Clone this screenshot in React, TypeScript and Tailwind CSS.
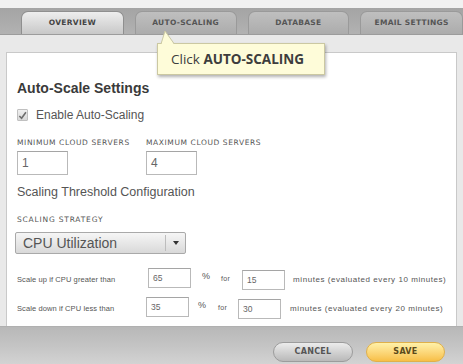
import React from "react";

const tabFont = { fontFamily: '"DejaVu Sans", Verdana, sans-serif' };
const sans = { fontFamily: '"Liberation Sans", Arial, sans-serif' };

function Tab({ label, active, w }: { label: string; active?: boolean; w: number }) {
  return (
    <div
      style={{ width: w, ...tabFont }}
      className={
        "h-[23px] rounded-t-[7px] flex items-center justify-center text-[7.5px] font-bold tracking-[0.3px] border border-b-0 " +
        (active
          ? "bg-gradient-to-b from-[#eeeeee] to-[#c8c8c8] border-[#8f8f8f] text-[#444]"
          : "bg-gradient-to-b from-[#bfbfbf] to-[#acacac] border-[#9a9a9a] text-[#555]")
      }
    >
      {label}
    </div>
  );
}

function Box({ value, w, h, size }: { value: string; w: number; h: number; size: number }) {
  return (
    <div
      style={{ width: w, height: h, fontSize: size, ...sans }}
      className="bg-white border border-[#b9b9b9] border-t-[#a5a5a5] text-[#666] pl-[4px] flex items-center shrink-0"
    >
      {value}
    </div>
  );
}

function Row({
  label,
  v1,
  v2,
  note,
  labelW,
  pctMl,
  forMl,
  boxMl,
  noteMl,
}: {
  label: string;
  v1: string;
  v2: string;
  note: string;
  labelW: number;
  pctMl: number;
  forMl: number;
  boxMl: number;
  noteMl: number;
}) {
  return (
    <div className="flex items-center h-[20px] text-[#555]" style={sans}>
      <div style={{ width: labelW }} className="text-[7.5px] tracking-[0.1px] shrink-0">
        {label}
      </div>
      <div className="pb-[4px] flex">
        <Box value={v1} w={43} h={20} size={8.5} />
      </div>
      <div style={{ marginLeft: pctMl }} className="text-[9px] -mt-[6px]">%</div>
      <div style={{ marginLeft: forMl }} className="text-[7px] tracking-[0.3px] -mt-[2px]">for</div>
      <div style={{ marginLeft: boxMl }} className="flex">
        <Box value={v2} w={43} h={20} size={8.5} />
      </div>
      <div style={{ marginLeft: noteMl }} className="text-[8px] tracking-[0.55px] whitespace-nowrap">
        {note}
      </div>
    </div>
  );
}

export default function App() {
  return (
    <div className="relative w-[463px] h-[364px] overflow-hidden bg-[#ebebeb] flex flex-col">
      <div className="h-[8px] bg-[#f1f1f1] shrink-0" />
      <div className="h-[27px] shrink-0 bg-gradient-to-b from-[#a4a4a4] to-[#b2b2b2] flex items-end pl-[21px] gap-[11px] border-b border-[#9c9c9c]">
        <Tab label="OVERVIEW" active w={103} />
        <Tab label="AUTO-SCALING" w={102} />
        <Tab label="DATABASE" w={102} />
        <Tab label="EMAIL SETTINGS" w={103} />
      </div>
      <div className="flex-1 pt-[17px] pl-[6px] pr-[6px] bg-[#e9e9e9]">
        <div className="h-[274px] bg-white border border-[#c9c9c9] border-b-0 pl-[10px] flex flex-col" style={sans}>
          <div className="mt-[27px] h-[17px] text-[14px] font-bold text-[#3a3a3a] leading-[17px]">
            Auto-Scale Settings
          </div>
          <div className="mt-[11px] h-[14px] flex items-center gap-[8px]">
            <div className="w-[11px] h-[12px] bg-gradient-to-b from-[#f0f0f0] to-[#d8d8d8] border border-[#c0c0c0] rounded-[1px] flex items-center justify-center">
              <svg width="10" height="9" viewBox="0 0 10 9">
                <path d="M1.5 5 L4 7.5 L8.8 1" fill="none" stroke="#6e6e6e" strokeWidth="1.8" />
              </svg>
            </div>
            <div className="text-[12px] text-[#555] leading-[14px]">Enable Auto-Scaling</div>
          </div>
          <div className="mt-[16px] h-[9px] flex text-[7.5px] leading-[9px] tracking-[0.6px] text-[#555]" style={tabFont}>
            <div className="w-[129px]">MINIMUM CLOUD SERVERS</div>
            <div>MAXIMUM CLOUD SERVERS</div>
          </div>
          <div className="mt-[4px] flex">
            <div className="w-[129px]">
              <Box value="1" w={51} h={24} size={12} />
            </div>
            <Box value="4" w={51} h={24} size={12} />
          </div>
          <div className="mt-[10px] h-[15px] text-[12.5px] leading-[15px] text-[#555]">
            Scaling Threshold Configuration
          </div>
          <div className="mt-[15px] h-[9px] text-[7.5px] leading-[9px] tracking-[0.8px] text-[#555]" style={tabFont}>
            SCALING STRATEGY
          </div>
          <div className="mt-[8px] w-[171px] h-[22px] -ml-[2px] rounded-[2px] border border-[#a9a9a9] bg-gradient-to-b from-[#f6f6f6] to-[#d9d9d9] flex items-center">
            <div className="flex-1 pl-[7px] text-[14px] text-[#555]">CPU Utilization</div>
            <div className="w-px h-[16px] bg-[#bdbdbd]" />
            <div className="w-[19px] flex justify-center">
              <svg width="6" height="4" viewBox="0 0 6 4">
                <path d="M0 0 H6 L3 4 Z" fill="#333" />
              </svg>
            </div>
          </div>
          <div className="mt-[16px]">
            <Row
              label="Scale up if CPU greater than"
              v1="65"
              v2="15"
              note="minutes (evaluated every 10 minutes)"
              labelW={131}
              pctMl={11}
              forMl={11}
              boxMl={12}
              noteMl={8}
            />
          </div>
          <div className="mt-[9px]">
            <Row
              label="Scale down if CPU less than"
              v1="35"
              v2="30"
              note="minutes (evaluated every 20 minutes)"
              labelW={129}
              pctMl={9}
              forMl={12}
              boxMl={11}
              noteMl={9}
            />
          </div>
        </div>
      </div>
      <div className="h-[38px] shrink-0 border-t border-[#b0b0b0] bg-gradient-to-b from-[#b8b8b8] via-[#c4c4c4] to-[#d3d3d3] flex justify-end items-start pt-[15px] pr-[18px] gap-[13px]">
        <div
          className="w-[80px] h-[20px] rounded-full border border-[#9c9c9c] bg-gradient-to-b from-[#ececec] to-[#b9b9b9] flex items-center justify-center text-[8px] font-bold tracking-[0.3px] text-[#555]"
          style={tabFont}
        >
          CANCEL
        </div>
        <div
          className="w-[79px] h-[20px] rounded-full border border-[#e0b04a] bg-gradient-to-b from-[#fff1a8] to-[#f7bf45] flex items-center justify-center text-[8px] font-bold tracking-[0.3px] text-[#5b4a1c]"
          style={tabFont}
        >
          SAVE
        </div>
      </div>

      {/* Tooltip */}
      <div
        className="absolute left-[157px] top-[43px] w-[168px] h-[32px] bg-[#fefcd9] border border-[#cbc8a2] shadow-[1px_2px_3px_rgba(0,0,0,0.3)] flex items-center pl-[13px] text-[13.5px] text-[#3d3d3d]"
        style={{ fontFamily: '"Open Sans", "Noto Sans", sans-serif' }}
      >
        <span>Click&nbsp;</span>
        <span className="font-bold">AUTO-SCALING</span>
      </div>
      <svg className="absolute left-[157px] top-[30px]" width="20" height="15" viewBox="0 0 20 15">
        <polygon points="4,14.5 8,1 17,14.5" fill="#fefcd9" />
        <polyline points="4,14 8,1 17,13.5" fill="none" stroke="#cbc8a2" strokeWidth="1" />
      </svg>
    </div>
  );
}
